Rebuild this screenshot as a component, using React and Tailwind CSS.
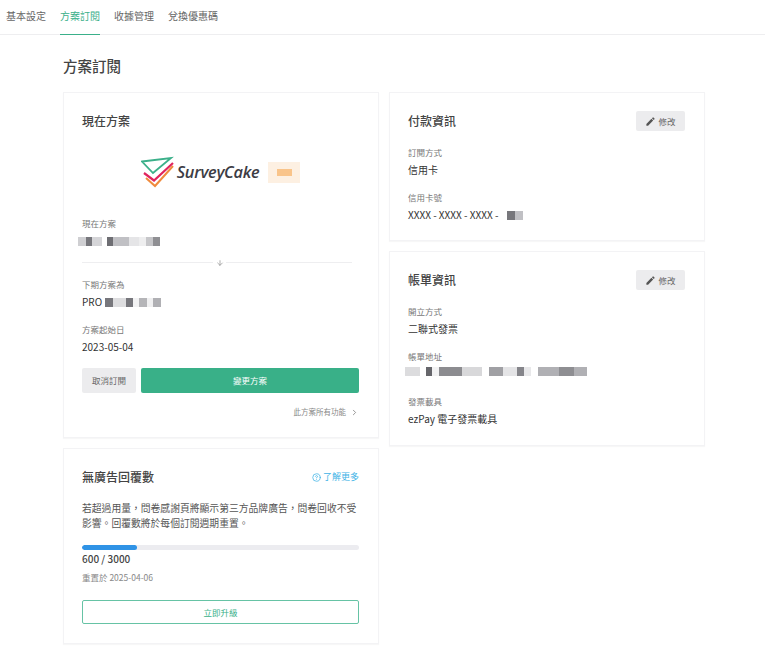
import { ArrowDown, ChevronRight, CircleHelp } from "lucide-react";
import { MdEdit } from "react-icons/md";

const tabs = ["基本設定", "方案訂閱", "收據管理", "兌換優惠碼"];

// mosaic used where the screenshot is censored
function Blur({ blocks, className = "" }) {
  return (
    <div className={`flex h-[9px] blur-[0.6px] ${className}`}>
      {blocks.map((b, i) => (
        <div key={i} className={b[1]} style={{ width: b[0] }} />
      ))}
    </div>
  );
}

function Card({ className = "", children }) {
  return (
    <section className={`bg-white border border-[#f3f3f5] shadow-[0_1px_1px_rgba(0,0,0,0.03)] pl-[18px] pr-[19px] ${className}`}>
      {children}
    </section>
  );
}

function Field({ label, children, className = "" }) {
  return (
    <div className={className}>
      <div className="text-[8.5px] leading-[14px] text-[#777]">{label}</div>
      <div className="mt-[2px] h-[18px] text-[10px] leading-[18px] text-[#333]">{children}</div>
    </div>
  );
}

function EditButton() {
  return (
    <button className="w-[49px] h-[20px] bg-[#ececee] rounded-[2px] flex items-center justify-center gap-[2px] text-[8.5px] text-[#666]">
      <MdEdit size={11} color="#555" />
      修改
    </button>
  );
}

function Logo() {
  return (
    <div className="flex items-center justify-center">
      <svg width="33" height="32" viewBox="0 0 33 32" fill="none">
        <path d="M5 22 L14 30 L32 10" stroke="#f08a3c" strokeWidth="2" />
        <path d="M3 17 L13 24.5 L32 7" stroke="#e0245e" strokeWidth="2.2" />
        <path d="M1 5.5 L30 2 L12 17 Z" stroke="#3cb08a" strokeWidth="1.8" fill="white" />
      </svg>
      <span className="ml-[3px] text-[16.3px] leading-none italic font-semibold text-[#3c3c44] font-['Open_Sans',sans-serif] tracking-[-0.3px]">
        SurveyCake
      </span>
      <div className="ml-[9px] w-[32px] h-[21px] bg-[#fdf0e2] flex items-center justify-center">
        <div className="w-[15px] h-[7px] bg-[#f9c48a]" />
      </div>
    </div>
  );
}

export default function App() {
  return (
    <div className="w-[765px] h-[651px] overflow-hidden bg-white font-['Noto_Sans_CJK_TC','Noto_Sans',sans-serif]">
      <nav className="h-[35px] border-b border-[#eeeef0] flex pl-[6px] gap-[14px]">
        {tabs.map((t, i) => (
          <div
            key={t}
            className={`h-[35px] leading-[32px] text-[10px] ${
              i === 1 ? "text-[#3ab08a] border-b border-[#3ab08a]" : "text-[#666]"
            }`}
          >
            {t}
          </div>
        ))}
      </nav>

      <div className="pl-[63px]">
        <h1 className="mt-[20px] h-[22px] leading-[22px] text-[14.5px] font-medium text-[#444]">方案訂閱</h1>

        <div className="mt-[15px] flex gap-[10px] items-start">
          <div className="w-[316px] flex flex-col gap-[10px]">
            <Card className="h-[346px] pt-[19px]">
              <h2 className="h-[18px] leading-[18px] text-[12px] font-medium text-[#444]">現在方案</h2>
              <div className="mt-[26px]">
                <Logo />
              </div>
              <div className="mt-[28px] text-[8.5px] leading-[14px] text-[#777]">現在方案</div>
              <Blur
                className="mt-[7px] -ml-[4px]"
                blocks={[
                  [8, "bg-[#cfcfd2]"],
                  [6, "bg-[#77777c]"],
                  [10, "bg-[#d5d5d8]"],
                  [5, "bg-white"],
                  [6, "bg-[#6e6e73]"],
                  [16, "bg-[#c0c0c4]"],
                  [10, "bg-[#e5e5e7]"],
                  [7, "bg-[#eeeeef]"],
                  [7, "bg-[#c6c6c9]"],
                  [7, "bg-[#8f8f93]"],
                ]}
              />
              <div className="relative mt-[16px] h-px bg-[#eeeef0] mr-[7px]">
                <div className="absolute left-[131px] -top-[6px] w-[13px] h-[13px] bg-white flex items-center justify-center">
                  <ArrowDown size={8} stroke="#888" />
                </div>
              </div>
              <Field label="下期方案為" className="mt-[14px]">
                <div className="flex items-center gap-[3px]">
                  PRO
                  <Blur
                    blocks={[
                      [8, "bg-[#77777c]"],
                      [13, "bg-[#dddddf]"],
                      [7, "bg-[#77777c]"],
                      [6, "bg-[#f2f2f3]"],
                      [8, "bg-[#b5b5b8]"],
                      [6, "bg-[#f0f0f1]"],
                      [8, "bg-[#b0b0b4]"],
                    ]}
                  />
                </div>
              </Field>
              <Field label="方案起始日" className="mt-[11px]">2023-05-04</Field>
              <div className="mt-[12px] flex gap-[5px]">
                <button className="w-[54px] h-[25px] rounded-[2px] bg-[#ececee] text-[8.5px] text-[#666]">取消訂閱</button>
                <button className="flex-1 h-[25px] rounded-[2px] bg-[#39b088] text-[8.5px] text-white">變更方案</button>
              </div>
              <div className="mt-[11px] flex items-center justify-end gap-[4px] text-[7.5px] leading-[16px] text-[#888]">
                此方案所有功能
                <ChevronRight size={9} stroke="#777" />
              </div>
            </Card>

            <Card className="h-[196px] pt-[18px]">
              <div className="flex items-center justify-between h-[20px]">
                <h2 className="text-[12px] font-medium text-[#444]">無廣告回覆數</h2>
                <a className="flex items-center gap-[2px] text-[9px] text-[#3fb3e6]">
                  <CircleHelp size={9} stroke="#3fb3e6" />
                  了解更多
                </a>
              </div>
              <p className="mt-[14px] text-[9.8px] leading-[15px] text-[#555]">
                若超過用量，問卷感謝頁將顯示第三方品牌廣告，問卷回收不受影響。回覆數將於每個訂閱週期重置。
              </p>
              <div className="mt-[14px] h-[5px] bg-[#ececf0] rounded-full overflow-hidden">
                <div className="h-full w-[20%] bg-[#2f93e6] rounded-full" />
              </div>
              <div className="mt-[1px] h-[16px] leading-[16px] text-[10px] font-medium text-[#444]">600 / 3000</div>
              <div className="mt-[3px] h-[14px] leading-[14px] text-[8.5px] text-[#888]">重置於 2025-04-06</div>
              <button className="mt-[16px] w-full h-[24px] border border-[#66c3a5] rounded-[2px] text-[8.5px] text-[#39b088]">
                立即升級
              </button>
            </Card>
          </div>

          <div className="w-[316px] flex flex-col gap-[10px]">
            <Card className="h-[149px] pt-[18px]">
              <div className="flex items-center justify-between h-[20px]">
                <h2 className="text-[12px] font-medium text-[#444]">付款資訊</h2>
                <EditButton />
              </div>
              <Field label="訂閱方式" className="mt-[14px]">信用卡</Field>
              <Field label="信用卡號" className="mt-[11px]">
                <div className="flex items-center gap-[9px]">
                  XXXX - XXXX - XXXX -
                  <Blur blocks={[[8, "bg-[#77777c]"], [8, "bg-[#c0c0c4]"]]} />
                </div>
              </Field>
            </Card>

            <Card className="h-[195px] pt-[18px]">
              <div className="flex items-center justify-between h-[20px]">
                <h2 className="text-[12px] font-medium text-[#444]">帳單資訊</h2>
                <EditButton />
              </div>
              <Field label="開立方式" className="mt-[14px]">二聯式發票</Field>
              <Field label="帳單地址" className="mt-[11px]">
                <div className="pt-[2px]">
                  <Blur
                    className="-ml-[3px]"
                    blocks={[
                      [15, "bg-[#dcdcde]"],
                      [6, "bg-white"],
                      [6, "bg-[#66666b]"],
                      [7, "bg-[#f2f2f3]"],
                      [23, "bg-[#8c8c90]"],
                      [20, "bg-[#d8d8da]"],
                      [7, "bg-white"],
                      [14, "bg-[#a0a0a4]"],
                      [14, "bg-[#e4e4e6]"],
                      [7, "bg-[#85858a]"],
                      [7, "bg-[#e8e8ea]"],
                      [7, "bg-white"],
                      [21, "bg-[#b0b0b4]"],
                      [15, "bg-[#8e8e92]"],
                      [13, "bg-[#b0b0b4]"],
                    ]}
                  />
                </div>
              </Field>
              <Field label="發票載具" className="mt-[11px]">ezPay 電子發票載具</Field>
            </Card>
          </div>
        </div>
      </div>
    </div>
  );
}
